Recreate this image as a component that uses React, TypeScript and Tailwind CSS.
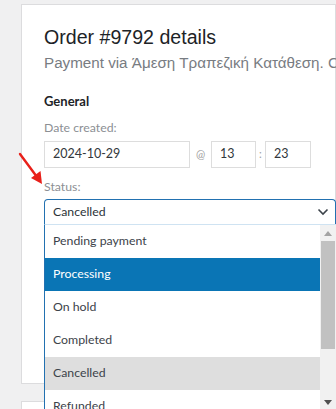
import React from "react";

const statuses = [
  "Pending payment",
  "Processing",
  "On hold",
  "Completed",
  "Cancelled",
  "Refunded",
];

const inputBox =
  "flex h-[27px] items-center border border-[#dddddd] px-[8px] text-[12.5px] text-[#32373c]";

export default function App() {
  return (
    <div className="relative h-[409px] w-[336px] overflow-hidden bg-[#f0f0f1] [font-family:Lato,'Noto_Sans',sans-serif]">
      {/* order data panel */}
      <div className="ml-[21px] mt-[4px] h-[380px] border border-[#dcdcde] bg-white pl-[22px] pt-[18px]">
        <h2 className="whitespace-nowrap text-[19.6px] leading-[28px] text-[#1d2327] [font-family:'Liberation_Sans',Arial,sans-serif]">
          Order #9792 details
        </h2>
        <p className="mt-[2px] whitespace-nowrap text-[15.2px] leading-[20px] text-[#787c82] [font-family:'Liberation_Sans',Arial,sans-serif]">
          Payment via Άμεση Τραπεζική Κατάθεση. Customer IP: 0.0.0.0
        </p>

        <h3 className="mt-[18px] text-[13px] font-bold leading-[20px] text-[#1d2327]">General</h3>

        <div className="mt-[8px] text-[12.3px] leading-[18px] text-[#8c8f94]">Date created:</div>
        <div className="mt-[4px] flex items-center">
          <div className={inputBox + " w-[146px]"}>2024-10-29</div>
          <span className="w-[21px] text-center text-[11px] text-[#a0a0a0]">@</span>
          <div className={inputBox + " w-[45px]"}>13</div>
          <span className="w-[9px] text-center text-[11px] text-[#a0a0a0]">:</span>
          <div className={inputBox + " w-[46px]"}>23</div>
        </div>

        <div className="mt-[10px] text-[12.3px] leading-[18px] text-[#8c8f94]">Status:</div>
        <div className="relative mt-[3px] w-[292px]">
          <div className="flex h-[25px] items-center justify-between rounded-t-[4px] border border-b-0 border-[#2271b1] pl-[8px] pr-[6px] text-[12.3px] text-[#2c3338]">
            <span>Cancelled</span>
            <svg width="12" height="8" viewBox="0 0 12 8" fill="none">
              <path d="M1.5 1.5 6 6l4.5-4.5" stroke="#3c434a" strokeWidth="1.6" />
            </svg>
          </div>

          {/* open select list */}
          <div className="absolute left-0 top-full z-10 flex w-full border-l border-t border-l-[#2271b1] border-t-[#cfe3f2] bg-white">
            <div className="flex-1">
              {statuses.map((s) => (
                <div
                  key={s}
                  className={
                    "flex h-[33px] items-center pl-[8px] text-[12.3px] " +
                    (s === "Processing"
                      ? "bg-[#0a75b5] text-white"
                      : s === "Cancelled"
                      ? "bg-[#dedede] text-[#3c434a]"
                      : "text-[#3c434a]")
                  }
                >
                  {s}
                </div>
              ))}
            </div>
            <div className="relative w-[16px] bg-[#f1f1f1]">
              <svg className="absolute left-[4px] top-[6px]" width="8" height="5" viewBox="0 0 8 5">
                <path d="M0 5 4 0l4 5z" fill="#a3a3a3" />
              </svg>
              <div className="absolute left-[1px] top-[16px] h-[108px] w-[14px] bg-[#c1c1c1]" />
              <svg className="absolute left-[4px] top-[175px]" width="8" height="5" viewBox="0 0 8 5">
                <path d="M0 0h8L4 5z" fill="#505050" />
              </svg>
            </div>
          </div>
        </div>
      </div>

      {/* next panel peeking in */}
      <div className="ml-[21px] mt-[17px] h-[30px] border border-[#dcdcde] bg-white" />

      {/* red annotation arrow */}
      <svg className="absolute left-[17px] top-[151px]" width="30" height="36" viewBox="0 0 30 36">
        <path d="M3 3 20 26" stroke="#e8201a" strokeWidth="2.4" strokeLinecap="round" />
        <path d="M25 33 14 27l9.5-7z" fill="#e8201a" />
      </svg>
    </div>
  );
}
